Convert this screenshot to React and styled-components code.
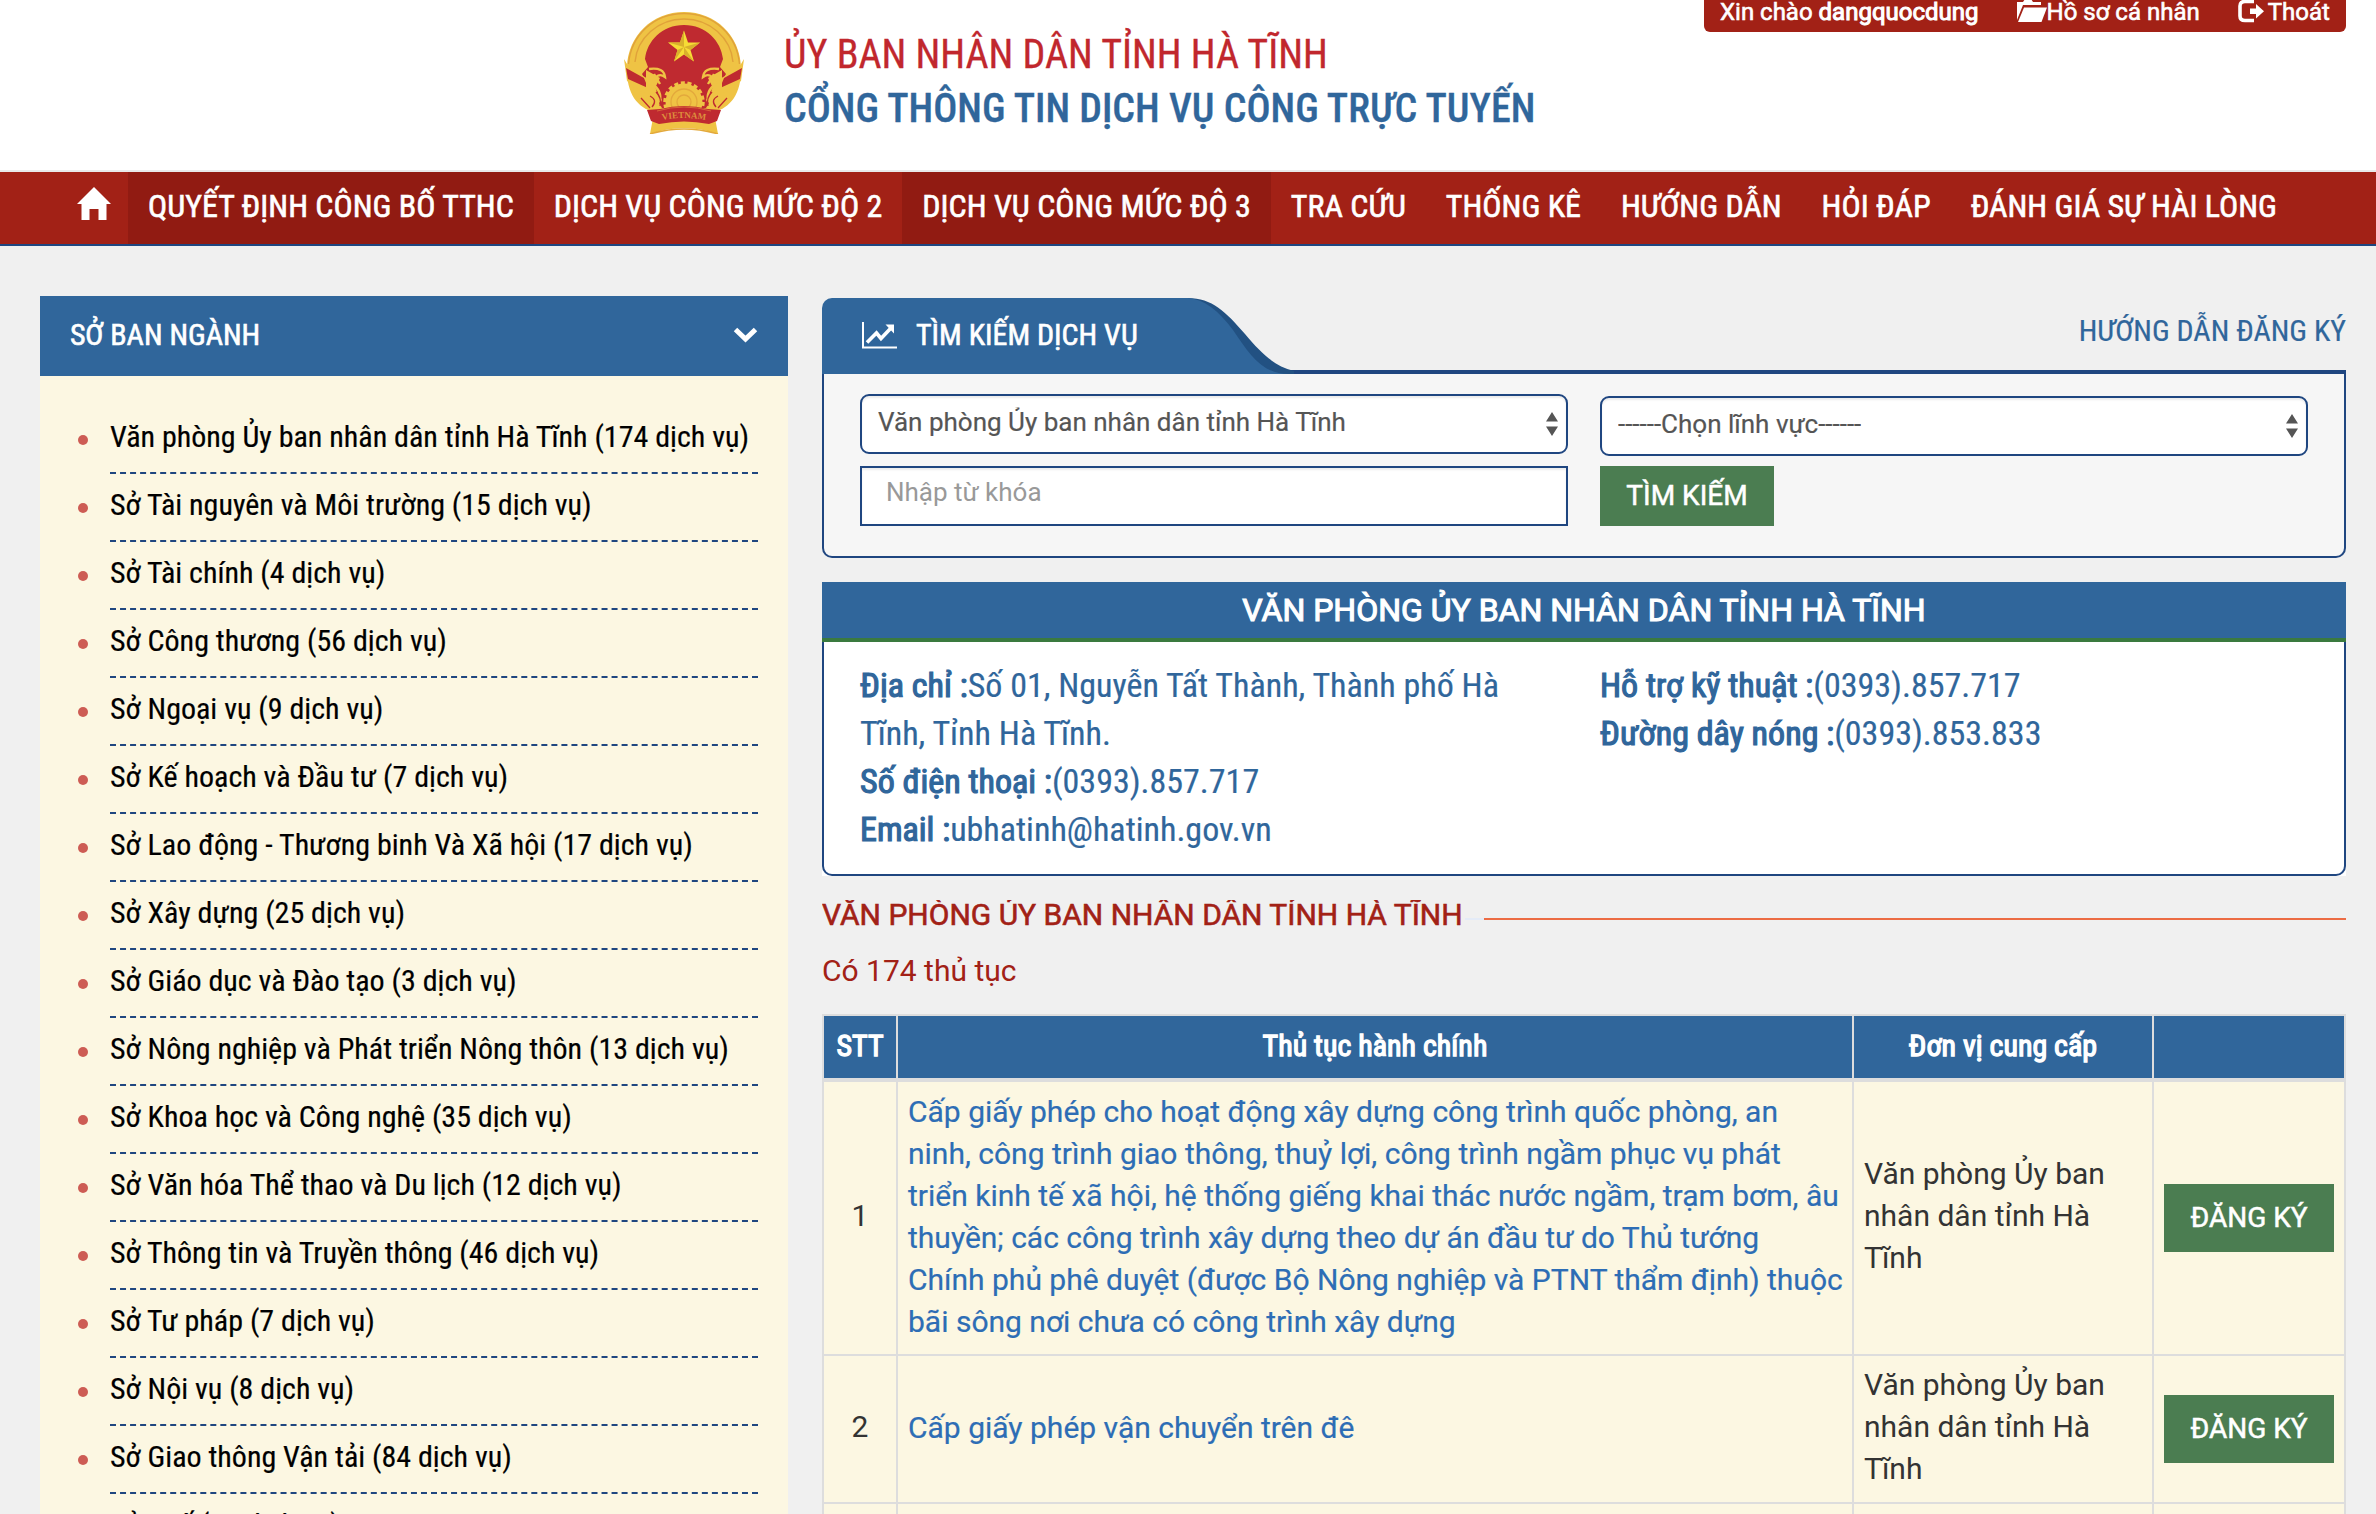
import React from 'react';
import styled, { createGlobalStyle, css } from 'styled-components';

const color = {
  red: '#a22116',
  redDark: '#911b12',
  blue: '#30669b',
  navy: '#1f4680',
  green: '#4b7d51',
  cream: '#fcf7e2',
  page: '#f0f0f0',
  line: '#dddddd',
};
const condensed = '"Roboto Condensed", Roboto, sans-serif';

const GlobalStyle = createGlobalStyle`
  *, *::before, *::after { box-sizing: border-box; }
  html, body { margin: 0; height: 1514px; overflow: hidden; }
  body { background: ${color.page}; font-family: Roboto, sans-serif; color: #333; }
  a { color: inherit; text-decoration: none; }
  ul { list-style: none; margin: 0; padding: 0; }
  h1, h2, h3, p { margin: 0; font-weight: 400; }
  svg { display: block; flex: none; }
`;

const Page = styled.div`
  width: 2376px;
  height: 1514px;
  overflow: hidden;
`;

/* ---------- header ---------- */
const Header = styled.header`
  display: flex;
  align-items: flex-start;
  height: 172px;
  padding-left: 624px;
  background: #fff;
  border-bottom: 2px solid #e9e9e9;
`;
const Logo = styled.div`
  margin-top: 12px;
`;
const Titles = styled.div`
  margin: 28px 0 0 40px;
  font-family: ${condensed};
  white-space: nowrap;
`;
const Title = styled.h1`
  font-size: 40px;
  line-height: 54px;
  color: ${p => (p.$main ? color.blue : '#c1272d')};
  font-weight: ${p => (p.$main ? 500 : 400)};
  -webkit-text-stroke: 0.3px currentColor;
`;
const UserBar = styled.div`
  display: flex;
  height: 32px;
  width: 642px;
  margin: 0 30px 0 auto;
  padding-left: 16px;
  border-radius: 0 0 6px 6px;
  background: ${color.red};
  color: #fff;
  font-size: 24px;
  line-height: 24px;
  white-space: nowrap;
  -webkit-text-stroke: 0.6px #fff;
`;
const UserName = styled.strong`
  font-weight: 400;
  -webkit-text-stroke: 1px #fff;
`;
const UserLink = styled.a`
  display: flex;
  gap: ${p => p.$gap}px;
  margin-left: ${p => p.$left}px;
`;

/* ---------- navigation ---------- */
const Nav = styled.nav`
  display: flex;
  height: 74px;
  padding-left: 57px;
  background: ${color.red};
  border-bottom: 2px solid ${color.navy};
  font-family: ${condensed};
  font-size: 32px;
  line-height: 68px;
  color: #fff;
  white-space: nowrap;
`;
const NavItem = styled.a`
  padding: 0 20px;
  -webkit-text-stroke: 0.6px #fff;
  ${p => p.$dark && css`background: ${color.redDark};`}
`;
const HomeItem = styled(NavItem)`
  width: 71px;
  padding-top: 15px;
`;

/* ---------- columns ---------- */
const Columns = styled.main`
  display: grid;
  grid-template-columns: 748px 1524px;
  column-gap: 34px;
  padding: 50px 0 0 40px;
`;
const Sidebar = styled.aside`
  min-height: 1300px;
  background: ${color.cream};
`;
const SidebarHead = styled.div`
  display: flex;
  justify-content: space-between;
  height: 80px;
  padding: 0 30px 0 30px;
  background: ${color.blue};
  color: #fff;
  font-family: ${condensed};
  font-size: 30px;
  line-height: 78px;
  -webkit-text-stroke: 0.6px #fff;
`;
const HeadIcon = styled.span`
  padding-top: 31px;
`;
const DeptList = styled.ul`
  padding: 30px 30px 0 38px;
`;
const Dept = styled.li`
  display: grid;
  grid-template-columns: 10px 1fr;
  column-gap: 22px;
  align-items: center;
  &::before {
    content: '';
    width: 10px;
    height: 10px;
    margin-top: -1px;
    border-radius: 50%;
    background: #cd5c54;
  }
`;
const DeptLink = styled.a`
  height: 68px;
  border-bottom: 2px dashed ${color.navy};
  font-family: ${condensed};
  font-size: 30px;
  line-height: 62px;
  color: #000;
  white-space: nowrap;
  -webkit-text-stroke: 0.2px #000;
`;

const Content = styled.section`
  padding-top: 2px;
`;

/* ---------- search ---------- */
const TabRow = styled.div`
  display: flex;
  height: 76px;
  background: linear-gradient(${color.navy}, ${color.navy}) bottom / 100% 4px no-repeat;
`;
const Tab = styled.h2`
  display: flex;
  width: 366px;
  gap: 19px;
  padding-left: 40px;
  border-top-left-radius: 10px;
  background: ${color.blue};
  color: #fff;
  font-family: ${condensed};
  font-size: 30px;
  line-height: 74px;
  white-space: nowrap;
  -webkit-text-stroke: 0.6px #fff;
`;
const TabIcon = styled.span`
  padding-top: 24px;
`;
const GuideLink = styled.a`
  margin-left: auto;
  font-family: ${condensed};
  font-size: 30px;
  line-height: 66px;
  color: ${color.blue};
  -webkit-text-stroke: 0.2px ${color.blue};
`;
const SearchPanel = styled.form`
  display: flex;
  gap: 32px;
  height: 184px;
  padding-left: 36px;
  background: #f6f6f6;
  border: 2px solid ${color.navy};
  border-top: 0;
  border-radius: 0 0 10px 10px;
`;
const FieldColumn = styled.div`
  display: flex;
  flex-direction: column;
  align-items: flex-start;
  gap: ${p => p.$gap}px;
  width: 708px;
  padding-top: ${p => p.$top}px;
`;
const fieldBox = css`
  width: 708px;
  height: 60px;
  background: #fff;
  border: 2px solid ${color.navy};
  box-shadow: inset 0 2px 2px rgba(0, 0, 0, 0.075);
  font-size: 26px;
`;
const SelectBox = styled.div`
  ${fieldBox}
  display: flex;
  align-items: center;
  justify-content: space-between;
  padding: 0 8px 1px 16px;
  border-radius: 9px;
  color: #555;
`;
const SelectValue = styled.span`
  height: 56px;
  line-height: 53px;
  -webkit-text-stroke: 0.2px #555;
  clip-path: inset(12px 0 0 0);
`;
const TextInput = styled.input`
  ${fieldBox}
  padding: 0 24px 8px;
  border-radius: 0;
  font-family: Roboto, sans-serif;
  &::placeholder { color: #999; opacity: 1; }
`;
const Button = styled.button`
  width: ${p => p.$w}px;
  height: ${p => p.$h}px;
  padding: 0 0 2px;
  border: 0;
  background: ${color.green};
  color: #fff;
  font: 400 28px Roboto, sans-serif;
  -webkit-text-stroke: 0.5px #fff;
`;

/* ---------- office card ---------- */
const Card = styled.section`
  margin-top: 24px;
  background: #fff;
`;
const CardHead = styled.h2`
  height: 60px;
  background: ${color.blue};
  border-bottom: 4px solid #3a7a3f;
  color: #fff;
  font-size: 32px;
  line-height: 57px;
  text-align: center;
  -webkit-text-stroke: 1.1px #fff;
`;
const CardBody = styled.div`
  display: grid;
  grid-template-columns: 660px 1fr;
  column-gap: 80px;
  height: 234px;
  padding: 19px 36px 0;
  border: 2px solid ${color.navy};
  border-top: 0;
  border-radius: 0 0 10px 10px;
  font-family: ${condensed};
  font-size: 34px;
  line-height: 48px;
  color: ${color.blue};
  -webkit-text-stroke: 0.2px ${color.blue};
`;
const Label = styled.span`
  -webkit-text-stroke: 1.2px ${color.blue};
`;

/* ---------- procedures ---------- */
const ListHead = styled.div`
  display: flex;
  align-items: center;
  height: 40px;
  margin-top: 20px;
`;
const ListTitle = styled.h3`
  width: 643px;
  height: 40px;
  font-size: 30px;
  line-height: 38px;
  color: ${color.red};
  white-space: nowrap;
  -webkit-text-stroke: 0.6px ${color.red};
  clip-path: inset(4px 0 0 0);
`;
const Rule = styled.span`
  height: 2px;
  margin-top: 6px;
  background: ${p => p.$c};
  ${p => (p.$w ? `width: ${p.$w}px;` : 'flex: 1;')}
`;
const Count = styled.p`
  margin: 14px 0 22px;
  font-size: 30px;
  line-height: 42px;
  color: ${color.red};
`;
const Table = styled.div`
  border: 2px solid ${color.line};
  border-right: 0;
`;
const Row = styled.div`
  display: grid;
  grid-template-columns: 74px 956px 300px 192px;
  background: ${color.cream};
  border-bottom: 2px solid ${color.line};
  font-size: 30px;
  line-height: 42px;
`;
const HeadRow = styled(Row)`
  height: 66px;
  background: ${color.blue};
  border-bottom-width: 4px;
  color: #fff;
  font-family: ${condensed};
  line-height: 60px;
  text-align: center;
  -webkit-text-stroke: 1.3px #fff;
`;
const Cell = styled.div`
  display: flex;
  align-items: center;
  justify-content: ${p => (p.$center ? 'center' : 'flex-start')};
  padding: ${p => p.$pad || '8px 10px 12px'};
  border-right: 2px solid ${color.line};
`;
const HeadCell = styled.div`
  border-right: 2px solid ${color.line};
`;
const ProcLink = styled.a`
  color: #2d6db5;
  -webkit-text-stroke: 0.2px #2d6db5;
`;

/* ---------- drawings ---------- */
const Emblem = () => (
  <svg width="120" height="122" viewBox="0 0 120 122">
    <path d="M60 0C28 0 4 24 3 55C2 82 14 96 30 100H90C106 96 118 82 117 55C116 24 92 0 60 0Z" fill="#efc344" />
    <path d="M60 1.500C30 1.500 7 23 4.500 52M60 1.500C90 1.500 113 23 115.500 52M60 7C34 7 13 26 11 50M60 7C86 7 107 26 109 50" fill="none" stroke="#e0a23a" strokeWidth="1.400" />
    <path d="M60 13C38 13 23 29 21 47L24 55L18 62L38 96H82L102 62L96 55L99 47C97 29 82 13 60 13Z" fill="#bf2a30" />
    <path d="M0 47L6 57L30 70L34 84L24 82L3 69Z" fill="#efc344" />
    <path d="M120 47L114 57L90 70L86 84L96 82L117 69Z" fill="#efc344" />
    <path d="M2 56L20 66L24 76L4 67Z" fill="#bf2a30" />
    <path d="M118 56L100 66L96 76L116 67Z" fill="#bf2a30" />
    <path d="M22 58L36 66L30 78L38 88L30 96L14 90L8 74L22 82Z" fill="#efc344" />
    <path d="M98 58L84 66L90 78L82 88L90 96L106 90L112 74L98 82Z" fill="#efc344" />
    <g fill="none" stroke="#efc344" strokeWidth="2.400">
      <path d="M25 57Q40 55 41 65Q33 59 28 72Q38 78 36 90M30 62L36 72" />
      <path d="M95 57Q80 55 79 65Q87 59 92 72Q82 78 84 90M90 62L84 72" />
    </g>
    <g fill="none" stroke="#bf2a30" strokeWidth="1.300">
      <path d="M26 84Q34 88 28 95M32 80Q38 86 36 94M17 86L26 96" />
      <path d="M94 84Q86 88 92 95M88 80Q82 86 84 94M103 86L94 96" />
    </g>
    <circle cx="60" cy="90" r="18.500" fill="#efc344" />
    <circle cx="60" cy="90" r="19" fill="none" stroke="#efc344" strokeWidth="3.500" strokeDasharray="4 2.600" />
    <circle cx="60" cy="90" r="13" fill="none" stroke="#e3a93c" strokeWidth="1.300" />
    <circle cx="60" cy="90" r="7" fill="none" stroke="#e3a93c" strokeWidth="1.300" />
    <path d="M60 18.500L64 30.500H76L66.500 38L70 49.500L60 42.500L50 49.500L53.500 38L44 30.500H56Z" fill="#f6dc35" />
    <path d="M60 18.500L60 35L56 30.500ZM76 30.500L60 35L66.500 38ZM70 49.500L60 35L60 42.500ZM50 49.500L60 35L53.500 38ZM44 30.500L60 35L56 30.500Z" fill="#d9b02c" />
    <path d="M29 106L26 122Q60 110 94 122L91 106Z" fill="#efc344" />
    <path d="M26 122Q60 112 94 122" fill="none" stroke="#e3a93c" strokeWidth="1.500" />
    <path d="M23 98L36 97Q60 91 84 97L97 98L93 109L85 112Q60 107 35 112L27 109Z" fill="#bf2a30" />
    <path d="M33 99Q60 91 87 99" fill="none" stroke="#d8653a" strokeWidth="1" />
    <path id="ribbon" d="M34 109Q60 103 86 109" fill="none" />
    <text fontFamily="Liberation Serif, serif" fontWeight="700" fontSize="9" fill="#dd8f3c" textAnchor="middle">
      <textPath href="#ribbon" startOffset="50%">VIETNAM</textPath>
    </text>
  </svg>
);
const HomeIcon = () => (
  <svg width="34" height="33" viewBox="0 0 34 33" fill="#fff">
    <path d="M17 0L34 17H29.500V33H21.500V22H12.500V33H4.500V17H0Z" />
  </svg>
);
const FolderIcon = () => (
  <svg width="30" height="22" viewBox="0 0 30 22" fill="#fff">
    <path d="M0 20V2H6L8 -1H14L16 2H24V5H6L0.800 18Z" />
    <path d="M7 7.500H30L24.500 22H1Z" />
  </svg>
);
const ExitIcon = () => (
  <svg width="27" height="23" viewBox="0 0 27 23">
    <path d="M16 1.500H7Q2 1.500 2 6V16Q2 20.500 7 20.500H16" fill="none" stroke="#fff" strokeWidth="3.600" />
    <path d="M12 8.500H18V4L26 11.200L18 18.500V14H12Z" fill="#fff" />
  </svg>
);
const ChevronIcon = () => (
  <svg width="25" height="16" viewBox="0 0 25 16">
    <path d="M2.500 2.500L12.500 12L22.500 2.500" fill="none" stroke="#fff" strokeWidth="5" />
  </svg>
);
const ChartIcon = () => (
  <svg width="35" height="28" viewBox="0 0 35 28">
    <path d="M1 0V25.500H35" fill="none" stroke="#fff" strokeWidth="2" />
    <path d="M5 20.500L14.500 11L19 16.500L29 6" fill="none" stroke="#fff" strokeWidth="3.600" />
    <path d="M23.500 2.500H32V11.500Z" fill="#fff" />
  </svg>
);
const TabCurve = () => (
  <svg width="108" height="76" viewBox="0 0 108 76">
    <path d="M0 0C24 0 38 14 57 36C74 56 86 68 106 73V76H0Z" fill="#225182" />
    <path d="M0 0C16 1 31 13 45 32C62 57 74 76 101 76H0Z" fill={color.blue} />
  </svg>
);
const SelectArrows = () => (
  <svg width="12" height="24" viewBox="0 0 12 24" fill="#555">
    <path d="M6 0L12 9.500H0ZM6 24L12 14.500H0Z" />
  </svg>
);

/* ---------- data ---------- */
const navItems = [
  ['QUYẾT ĐỊNH CÔNG BỐ TTHC', true],
  ['DỊCH VỤ CÔNG MỨC ĐỘ 2'],
  ['DỊCH VỤ CÔNG MỨC ĐỘ 3', true],
  ['TRA CỨU'],
  ['THỐNG KÊ'],
  ['HƯỚNG DẪN'],
  ['HỎI ĐÁP'],
  ['ĐÁNH GIÁ SỰ HÀI LÒNG'],
];
const departments = [
  ['Văn phòng Ủy ban nhân dân tỉnh Hà Tĩnh', 174],
  ['Sở Tài nguyên và Môi trường', 15],
  ['Sở Tài chính', 4],
  ['Sở Công thương', 56],
  ['Sở Ngoại vụ', 9],
  ['Sở Kế hoạch và Đầu tư', 7],
  ['Sở Lao động - Thương binh Và Xã hội', 17],
  ['Sở Xây dựng', 25],
  ['Sở Giáo dục và Đào tạo', 3],
  ['Sở Nông nghiệp và Phát triển Nông thôn', 13],
  ['Sở Khoa học và Công nghệ', 35],
  ['Sở Văn hóa Thể thao và Du lịch', 12],
  ['Sở Thông tin và Truyền thông', 46],
  ['Sở Tư pháp', 7],
  ['Sở Nội vụ', 8],
  ['Sở Giao thông Vận tải', 84],
  ['Sở Y tế', 16],
];
const procedures = [
  'Cấp giấy phép cho hoạt động xây dựng công trình quốc phòng, an ninh, công trình giao thông, thuỷ lợi, công trình ngầm phục vụ phát triển kinh tế xã hội, hệ thống giếng khai thác nước ngầm, trạm bơm, âu thuyền; các công trình xây dựng theo dự án đầu tư do Thủ tướng Chính\u00a0phủ phê duyệt (được Bộ Nông nghiệp và PTNT thẩm định) thuộc bãi sông nơi chưa có công trình xây dựng',
  'Cấp giấy phép vận chuyển trên đê',
];

export default function App() {
  return (
    <Page>
      <GlobalStyle />
      <Header>
        <Logo><Emblem /></Logo>
        <Titles>
          <Title>ỦY BAN NHÂN DÂN TỈNH HÀ TĨNH</Title>
          <Title $main>CỔNG THÔNG TIN DỊCH VỤ CÔNG TRỰC TUYẾN</Title>
        </Titles>
        <UserBar>
          <span>Xin chào <UserName>dangquocdung</UserName></span>
          <UserLink $left={38} $gap={0}><FolderIcon />Hồ sơ cá nhân</UserLink>
          <UserLink $left={38} $gap={3}><ExitIcon />Thoát</UserLink>
        </UserBar>
      </Header>
      <Nav>
        <HomeItem><HomeIcon /></HomeItem>
        {navItems.map(([label, dark]) => (
          <NavItem key={label} $dark={dark}>{label}</NavItem>
        ))}
      </Nav>
      <Columns>
        <Sidebar>
          <SidebarHead>SỞ BAN NGÀNH<HeadIcon><ChevronIcon /></HeadIcon></SidebarHead>
          <DeptList>
            {departments.map(([name, count]) => (
              <Dept key={name}><DeptLink>{`${name} (${count} dịch vụ)`}</DeptLink></Dept>
            ))}
          </DeptList>
        </Sidebar>
        <Content>
          <TabRow>
            <Tab><TabIcon><ChartIcon /></TabIcon>TÌM KIẾM DỊCH VỤ</Tab>
            <TabCurve />
            <GuideLink>HƯỚNG DẪN ĐĂNG KÝ</GuideLink>
          </TabRow>
          <SearchPanel>
            <FieldColumn $top={20} $gap={12}>
              <SelectBox><SelectValue>Văn phòng Ủy ban nhân dân tỉnh Hà Tĩnh</SelectValue><SelectArrows /></SelectBox>
              <TextInput placeholder="Nhập từ khóa" />
            </FieldColumn>
            <FieldColumn $top={22} $gap={10}>
              <SelectBox><SelectValue>------Chọn lĩnh vực------</SelectValue><SelectArrows /></SelectBox>
              <Button type="button" $w={174} $h={60}>TÌM KIẾM</Button>
            </FieldColumn>
          </SearchPanel>
          <Card>
            <CardHead>VĂN PHÒNG ỦY BAN NHÂN DÂN TỈNH HÀ TĨNH</CardHead>
            <CardBody>
              <div>
                <p><Label>Địa chỉ :</Label>Số 01, Nguyễn Tất Thành, Thành phố Hà Tĩnh, Tỉnh Hà Tĩnh.</p>
                <p><Label>Số điện thoại :</Label>(0393).857.717</p>
                <p><Label>Email :</Label>ubhatinh@hatinh.gov.vn</p>
              </div>
              <div>
                <p><Label>Hỗ trợ kỹ thuật :</Label>(0393).857.717</p>
                <p><Label>Đường dây nóng :</Label>(0393).853.833</p>
              </div>
            </CardBody>
          </Card>
          <ListHead>
            <ListTitle>VĂN PHÒNG ỦY BAN NHÂN DÂN TỈNH HÀ TĨNH</ListTitle>
            <Rule $c="#e4ebf7" $w={19} />
            <Rule $c="#ec6c44" />
          </ListHead>
          <Count>Có 174 thủ tục</Count>
          <Table>
            <HeadRow>
              <HeadCell>STT</HeadCell>
              <HeadCell>Thủ tục hành chính</HeadCell>
              <HeadCell>Đơn vị cung cấp</HeadCell>
              <HeadCell />
            </HeadRow>
            {procedures.map((name, i) => (
              <Row key={name}>
                <Cell $center>{i + 1}</Cell>
                <Cell $pad="9px 6px 11px 10px"><ProcLink>{name}</ProcLink></Cell>
                <Cell>Văn phòng Ủy ban nhân dân tỉnh Hà Tĩnh</Cell>
                <Cell $center $pad="0"><Button $w={170} $h={68}>ĐĂNG KÝ</Button></Cell>
              </Row>
            ))}
            <Row><Cell /><Cell /><Cell /><Cell /></Row>
          </Table>
        </Content>
      </Columns>
    </Page>
  );
}
